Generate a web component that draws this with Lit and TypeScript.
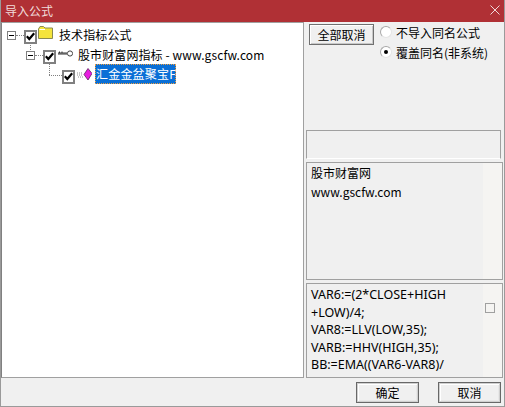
import { LitElement, html, css } from "lit";
import { customElement } from "lit/decorators.js";

const check = html`<span class="cb"><svg width="9" height="9" viewBox="0 0 9 9"><path d="M0.8 4.2 L3.3 7 L8.2 1.2" fill="none" stroke="#000" stroke-width="2.2"/></svg></span>`;
const minus = html`<span class="exp"></span><span class="dash"></span>`;

@customElement("app-root")
export class AppRoot extends LitElement {
  static styles = css`
    :host { display: block; width: 505px; height: 407px; background: #f0f0f0; font-family: "Noto Sans CJK SC", "Liberation Sans", sans-serif; font-size: 12px; color: #000; overflow: hidden; position: relative; box-sizing: border-box; border: 1px solid #9a9a9a; border-top: none; }
    .title { height: 22px; margin: 0 -1px; background: #b03035; color: #f0dcdc; display: flex; align-items: center; justify-content: space-between; padding: 0 5px 2px 5px; box-sizing: border-box; font-size: 12px; }
    .body { display: flex; height: 356px; }
    .tree { width: 303px; height: 356px; box-sizing: border-box; background: #fff; border: 1px solid #a0a0a0; border-left: 1px solid #808080; position: relative; flex: none; padding: 1px 0 0 5px; }
    .row { display: flex; align-items: center; height: 20px; white-space: nowrap; }
    .r2 { padding-left: 19px; }
    .r3 { padding-left: 55px; }
    .exp { width: 9px; height: 9px; box-sizing: border-box; border: 1px solid #808080; position: relative; background: #fff; flex: none; margin-top: 2px; }
    .exp::after { content: ""; position: absolute; left: 1px; top: 3px; width: 5px; height: 1px; background: #000; }
    .dash { width: 8px; height: 0; margin-top: 2px; border-top: 1px dotted #808080; flex: none; }
    .cb { width: 13px; height: 14px; box-sizing: border-box; border: 2px solid #808080; background: #fff; display: flex; align-items: center; justify-content: center; flex: none; margin-top: 5px; }
    .ic { flex: none; display: block; }
    .folder { margin: 0 0 4px 1px; }
    .key { margin: 0 0 2px 2px; }
    .gem { margin: 1px 0 0 2px; }
    .lab { margin-left: 5px; font-size: 12px; letter-spacing: 0.1px; }
    .lab1 { margin-left: 6px; }
    .sel { margin-left: 3px; background: #0a6fd6; color: #fff; outline: 1px dotted #f0a040; outline-offset: -1px; height: 20px; line-height: 20px; width: 81px; overflow: hidden; padding-left: 1px; box-sizing: border-box; letter-spacing: 0.2px; }
    .vline { position: absolute; border-left: 1px dotted #808080; }
    .hline { position: absolute; border-top: 1px dotted #808080; }
    .v1 { left: 28px; top: 20px; height: 7px; }
    .v2 { left: 47px; top: 40px; height: 12px; }
    .h2 { left: 47px; top: 52px; width: 13px; }
    .side { flex: 1; padding: 2px 1px 0 2px; display: flex; flex-direction: column; min-width: 0; }
    .top { display: flex; height: 106px; padding-left: 3px; gap: 6px; }
    .btn { box-sizing: border-box; background: #f0f0f0; border: 1px solid #707070; box-shadow: inset 1px 1px 0 #fff, inset -1px -1px 0 #c8c8c8; font: inherit; padding: 0; display: flex; align-items: center; justify-content: center; }
    .all { width: 65px; height: 21px; }
    .radios { display: flex; flex-direction: column; gap: 4px; }
    .radio { display: flex; align-items: center; height: 16px; gap: 4px; }
    .dot { width: 12px; height: 12px; border-radius: 50%; background: #fff; box-sizing: border-box; border: 1.5px solid #a8a8a8; border-right-color: #e4e4e4; border-bottom-color: #e4e4e4; display: flex; align-items: center; justify-content: center; }
    .dot i { width: 4px; height: 4px; border-radius: 50%; background: #000; display: block; }
    .empty { box-sizing: border-box; width: 195px; height: 29px; border: 1px solid #a0a0a0; border-bottom-color: #fff; }
    .info { box-sizing: border-box; height: 118px; margin-top: 3px; border: 1px solid #a0a0a0; background: #f5f4f2; }
    .inner { width: 176px; height: 100%; background: #f0f0f0; padding: 1px 0 0 4px; box-sizing: border-box; line-height: 18.5px; font-size: 12px; }
    .code { box-sizing: border-box; height: 95px; margin-top: 3px; border: 1px solid #a0a0a0; background: #f5f4f2; display: flex; }
    .code .inner { line-height: 17.5px; padding-top: 2px; overflow: hidden; flex: none; white-space: pre; font-family: "Noto Sans", "Liberation Sans", sans-serif; font-size: 12.5px; }
    .square { width: 10px; height: 10px; border: 1px solid #a0a0a0; box-sizing: border-box; margin: 19px 0 0 2px; background: #f5f4f2; }
    .foot { display: flex; justify-content: flex-end; gap: 19px; padding: 4px 3px 0 0; }
    .foot .btn { width: 63px; height: 21px; border-color: #686868; box-shadow: inset 1px 1px 0 #d0d0d0, inset -1px -1px 0 #d0d0d0, inset 2px 2px 0 #fff, inset -2px -2px 0 #e8e8e8; }
  `;

  render() {
    return html`
      <div class="title"><span>导入公式</span>
        <svg width="10" height="10" viewBox="0 0 10 10"><path d="M0.5 0.5 L9.5 9.5 M9.5 0.5 L0.5 9.5" stroke="#f0d8d8" fill="none"/></svg>
      </div>
      <div class="body">
        <div class="tree">
          <span class="vline v1"></span>
          <span class="vline v2"></span>
          <span class="hline h2"></span>
          <div class="row">${minus}${check}
            <svg class="ic folder" width="15" height="13" viewBox="0 0 15 13"><path d="M0.5 3 L0.5 12.5 L14.5 12.5 L14.5 2 L7 2 L5.5 0.5 L2 0.5 Z" fill="#f4e43c" stroke="#8a8a50"/><path d="M1.5 3.5 H7" stroke="#fff"/></svg>
            <span class="lab lab1">技术指标公式</span></div>
          <div class="row r2">${minus}${check}
            <svg class="ic key" width="15" height="9" viewBox="0 0 15 9"><circle cx="12" cy="4.5" r="2.6" fill="#fff" stroke="#444"/><path d="M0 4 H9 M0 5 H9" stroke="#333" fill="none"/><path d="M1.5 2.5 V4 M4 2.5 V4" stroke="#333"/></svg>
            <span class="lab">股市财富网指标 - www.gscfw.com</span></div>
          <div class="row r3">${check}
            <svg class="ic gem" width="15" height="13" viewBox="0 0 15 13"><path d="M0 5 H6 M0 7 H6 M1 9 H6" stroke="#909090" stroke-dasharray="1 1"/><path d="M11 0.5 L15 5.5 L11 12 L7 6.5 Z" fill="#e81ee0" stroke="#602060" stroke-width="0.8"/></svg>
            <span class="sel">汇金金盆聚宝F</span></div>
        </div>
        <div class="side">
          <div class="top">
            <div class="btn all">全部取消</div>
            <div class="radios">
              <div class="radio"><span class="dot"></span>不导入同名公式</div>
              <div class="radio"><span class="dot"><i></i></span>覆盖同名(非系统)</div>
            </div>
          </div>
          <div class="empty"></div>
          <div class="info"><div class="inner">股市财富网<br>www.gscfw.com</div></div>
          <div class="code"><div class="inner">VAR6:=(2*CLOSE+HIGH
+LOW)/4;
VAR8:=LLV(LOW,35);
VARB:=HHV(HIGH,35);
BB:=EMA((VAR6-VAR8)/</div><span class="square"></span></div>
        </div>
      </div>
      <div class="foot"><div class="btn">确定</div><div class="btn">取消</div></div>
    `;
  }
}
